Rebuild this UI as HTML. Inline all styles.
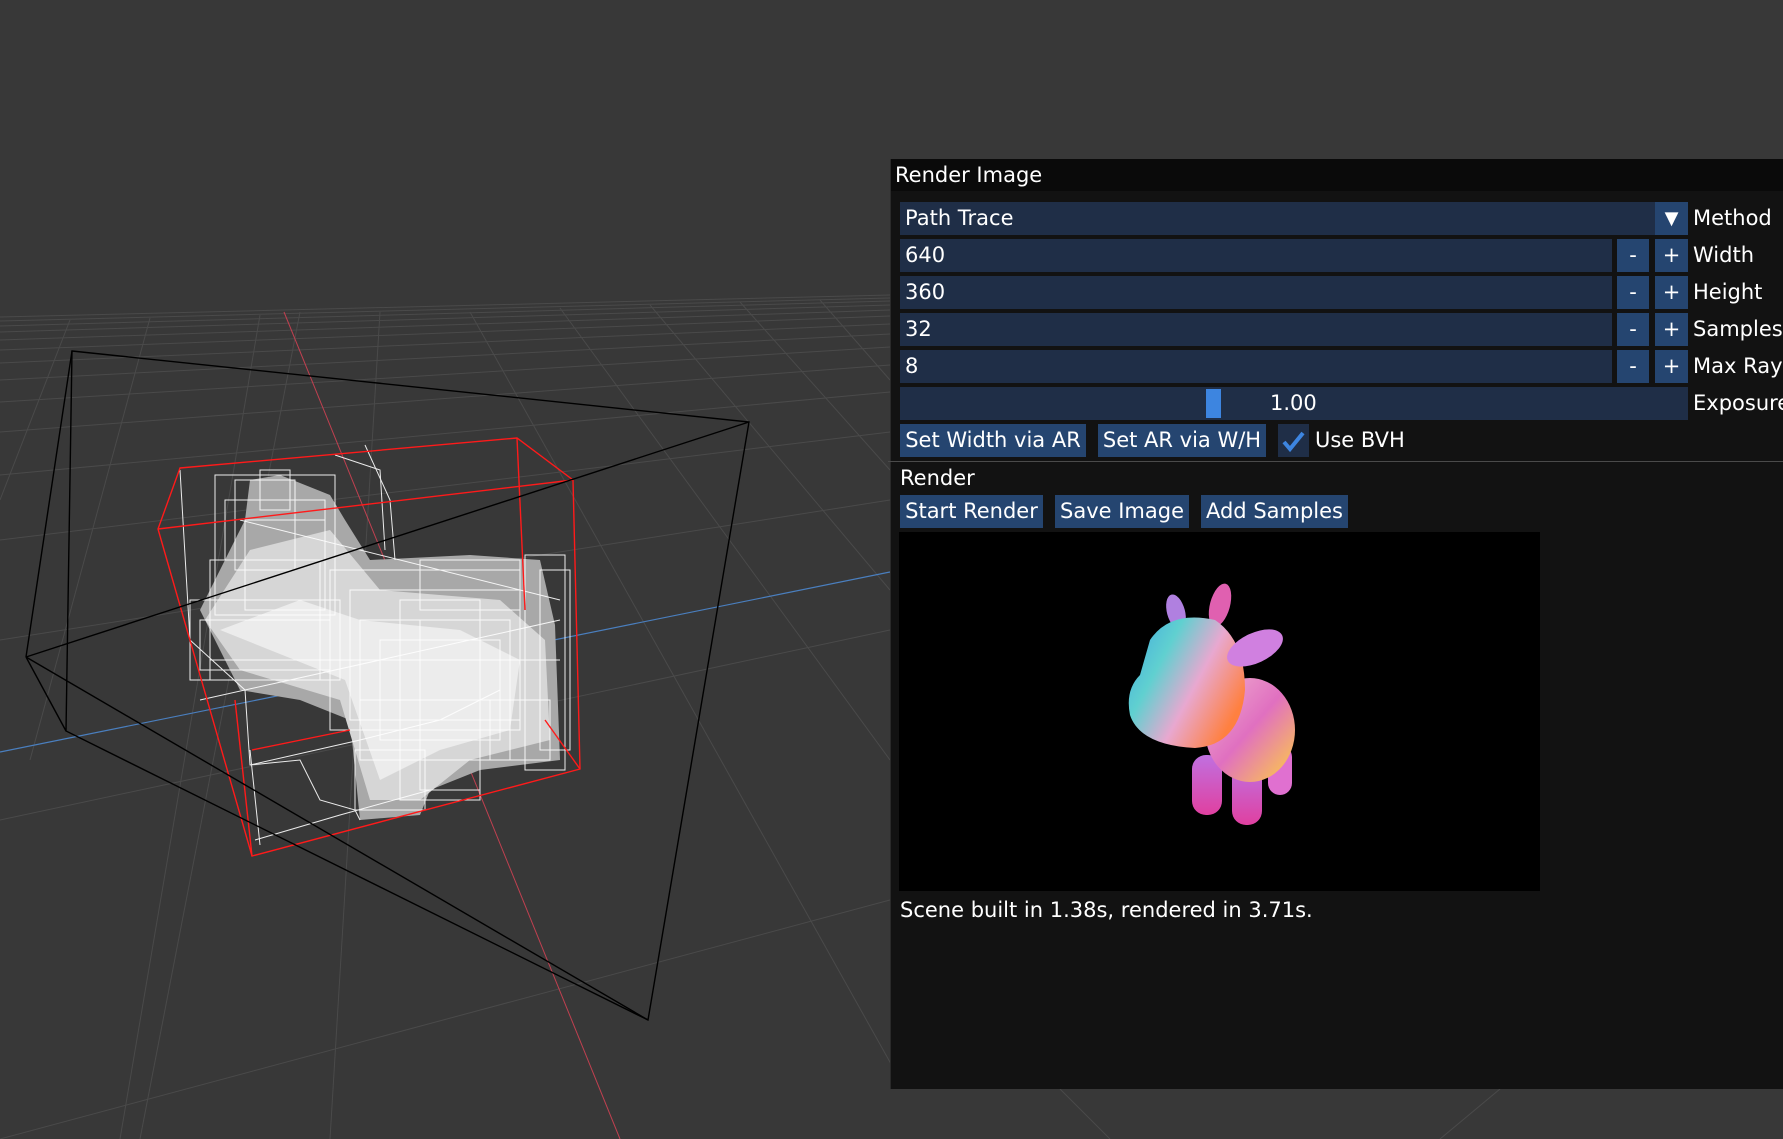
<!DOCTYPE html>
<html><head><meta charset="utf-8"><style>
html,body{margin:0;padding:0;width:1783px;height:1139px;overflow:hidden;background:#383838;font-family:"DejaVu Sans","Liberation Sans",sans-serif;}
#vp{position:absolute;left:0;top:0}
.panel{position:absolute;left:890px;top:159px;width:893px;height:930px;background:#121212;border-left:1px solid #2a2a2a;}
.title{position:absolute;left:0;top:0;width:893px;height:32px;background:#0a0a0a;color:#fff;font-size:21px;line-height:32px;padding-left:4px;box-sizing:border-box}
.f{position:absolute;background:#1f2e47;color:#fff;font-size:21px;line-height:33px;padding-left:5px;box-sizing:border-box;height:33px}
.b{position:absolute;background:#254570;color:#fff;font-size:21px;line-height:33px;text-align:center;height:33px}
.l{position:absolute;color:#fff;font-size:21px;line-height:33px;white-space:nowrap}
</style></head><body>
<svg id="vp" width="1783" height="1139" viewBox="0 0 1783 1139">
<rect width="1783" height="1139" fill="#383838"/>
<g stroke="#4a4a4a" stroke-width="1" fill="none">
<line x1="0" y1="317" x2="890" y2="295"/>
<line x1="0" y1="321" x2="890" y2="298"/>
<line x1="0" y1="326" x2="890" y2="301"/>
<line x1="0" y1="332" x2="890" y2="305"/>
<line x1="0" y1="340" x2="890" y2="310"/>
<line x1="0" y1="350" x2="890" y2="316"/>
<line x1="0" y1="363" x2="890" y2="324"/>
<line x1="0" y1="380" x2="890" y2="334"/>
<line x1="0" y1="402" x2="890" y2="347"/>
<line x1="0" y1="432" x2="890" y2="365"/>
<line x1="0" y1="475" x2="890" y2="392"/>
<line x1="0" y1="540" x2="890" y2="432"/>
<line x1="0" y1="640" x2="890" y2="500"/>
<line x1="0" y1="820" x2="890" y2="630"/>
<line x1="0" y1="1139" x2="890" y2="900"/>
<line x1="120" y1="1139" x2="260" y2="315"/>
<line x1="30" y1="760" x2="150" y2="318"/>
<line x1="0" y1="500" x2="70" y2="320"/>
<line x1="330" y1="1139" x2="380" y2="312"/>
<line x1="470" y1="312" x2="900" y2="1080"/>
<line x1="560" y1="308" x2="890" y2="760"/>
<line x1="650" y1="305" x2="890" y2="590"/>
<line x1="740" y1="302" x2="890" y2="470"/>
<line x1="820" y1="300" x2="890" y2="380"/>
<line x1="300" y1="312" x2="140" y2="1139"/>
<line x1="1060" y1="1089" x2="1110" y2="1139"/>
<line x1="1500" y1="1089" x2="1440" y2="1139"/>
</g>
<line x1="284" y1="312" x2="620" y2="1139" stroke="#c04050" stroke-width="1"/>
<line x1="0" y1="752" x2="890" y2="572" stroke="#4a7fbf" stroke-width="1.2"/>
<g>
<path d="M200 610 L245 520 L250 480 L280 475 L330 495 L345 520 L370 560 L470 555 L540 560 L555 625 L560 760 L480 770 L430 790 L420 815 L360 820 L350 720 L300 700 L240 690 Z" fill="#a8a8a8"/>
<path d="M205 620 L250 550 L330 530 L380 590 L500 600 L545 640 L550 740 L470 760 L420 800 L370 800 L340 700 L240 670 Z" fill="#d6d6d6"/>
<path d="M220 630 L300 600 L360 620 L460 630 L520 660 L510 730 L440 750 L380 780 L345 680 Z" fill="#ececec"/>
</g>
<g stroke="#ffffff" stroke-width="1" fill="none" opacity="0.9">
<rect x="215" y="475" width="120" height="140"/>
<rect x="235" y="480" width="60" height="90"/>
<rect x="260" y="470" width="30" height="40"/>
<rect x="225" y="500" width="100" height="60"/>
<rect x="245" y="520" width="80" height="90"/>
<path d="M180 470 L190 640 L245 690 L250 765 L300 760 L320 800 L355 810 L360 820"/>
<path d="M335 455 L380 470 L385 550"/>
<path d="M365 445 L390 500 L395 560"/>
<rect x="190" y="600" width="150" height="80"/>
<rect x="210" y="560" width="110" height="120"/>
<rect x="200" y="620" width="130" height="50"/>
<rect x="330" y="570" width="190" height="160"/>
<rect x="350" y="590" width="170" height="130"/>
<rect x="360" y="620" width="150" height="140"/>
<rect x="380" y="640" width="120" height="100"/>
<rect x="400" y="600" width="80" height="200"/>
<rect x="420" y="620" width="60" height="170"/>
<rect x="525" y="555" width="40" height="215"/>
<rect x="540" y="570" width="30" height="180"/>
<rect x="420" y="560" width="100" height="50"/>
<rect x="490" y="700" width="60" height="60"/>
<rect x="355" y="750" width="70" height="60"/>
<path d="M250 765 L360 740 L440 720 L500 690"/>
<path d="M255 840 L340 815 L430 790"/>
<path d="M250 750 L260 845"/>
<path d="M200 700 L560 620"/>
<path d="M240 520 L560 600"/>
<path d="M210 660 L560 660"/>
<path d="M360 700 L540 700"/>
</g>
<g stroke="#ff1a1a" stroke-width="1.4" fill="none">
<path d="M180 468 L517 438 L573 480 L580 769 L252 856 L158 529 Z"/>
<path d="M158 529 L573 480"/>
<path d="M517 438 L525 610"/>
<path d="M252 856 L235 700"/>
<path d="M252 750 L350 730"/>
<path d="M545 720 L580 769"/>
</g>
<g stroke="#000" stroke-width="1.4" fill="none">
<path d="M72 351 L749 422 L648 1020 L66 731 Z"/>
<path d="M26 657 L72 351"/>
<path d="M26 657 L749 422"/>
<path d="M26 657 L648 1020"/>
<path d="M26 657 L66 731"/>
</g>
</svg>
<div class="panel">
<div class="title">Render Image</div>
</div>
<div class="f" style="left:900px;top:202px;width:788px;">Path Trace</div>
<div class="b" style="left:1655px;top:202px;width:33px;font-size:18px">&#9660;</div>
<div class="l" style="left:1693px;top:202px">Method</div>

<div class="f" style="left:900px;top:239px;width:712px">640</div>
<div class="b" style="left:1617px;top:239px;width:32px">-</div>
<div class="b" style="left:1655px;top:239px;width:33px">+</div>
<div class="l" style="left:1693px;top:239px">Width</div>

<div class="f" style="left:900px;top:276px;width:712px">360</div>
<div class="b" style="left:1617px;top:276px;width:32px">-</div>
<div class="b" style="left:1655px;top:276px;width:33px">+</div>
<div class="l" style="left:1693px;top:276px">Height</div>

<div class="f" style="left:900px;top:313px;width:712px">32</div>
<div class="b" style="left:1617px;top:313px;width:32px">-</div>
<div class="b" style="left:1655px;top:313px;width:33px">+</div>
<div class="l" style="left:1693px;top:313px">Samples</div>

<div class="f" style="left:900px;top:350px;width:712px">8</div>
<div class="b" style="left:1617px;top:350px;width:32px">-</div>
<div class="b" style="left:1655px;top:350px;width:33px">+</div>
<div class="l" style="left:1693px;top:350px">Max Ray</div>

<div class="f" style="left:900px;top:387px;width:788px;"></div>
<div style="position:absolute;left:1206px;top:389px;width:15px;height:29px;background:#3d85e0"></div>
<div class="l" style="left:1270px;top:387px">1.00</div>
<div class="l" style="left:1693px;top:387px">Exposure</div>

<div class="b" style="left:900px;top:424px;width:186px">Set Width via AR</div>
<div class="b" style="left:1098px;top:424px;width:168px">Set AR via W/H</div>
<div style="position:absolute;left:1278px;top:424px;width:31px;height:33px;background:#1f2e47"></div>
<svg style="position:absolute;left:1278px;top:424px" width="31" height="33"><path d="M6 18 L12 25 L25 9" stroke="#3d85e0" stroke-width="4" fill="none"/></svg>
<div class="l" style="left:1315px;top:424px">Use BVH</div>

<div style="position:absolute;left:888px;top:461px;width:895px;height:1px;background:#4a4a4a"></div>
<div class="l" style="left:900px;top:462px">Render</div>
<div class="b" style="left:900px;top:495px;width:143px">Start Render</div>
<div class="b" style="left:1055px;top:495px;width:134px">Save Image</div>
<div class="b" style="left:1201px;top:495px;width:147px">Add Samples</div>

<svg style="position:absolute;left:899px;top:532px" width="641" height="359">
<rect width="641" height="359" fill="#000"/>
<defs>
<linearGradient id="h" x1="0" y1="0" x2="1" y2="0.6"><stop offset="0" stop-color="#40a8e0"/><stop offset="0.35" stop-color="#60d0d0"/><stop offset="0.65" stop-color="#e8a8d0"/><stop offset="1" stop-color="#ff8040"/></linearGradient>
<linearGradient id="bd" x1="0" y1="0" x2="1" y2="1"><stop offset="0" stop-color="#f0b0d0"/><stop offset="0.5" stop-color="#e070c0"/><stop offset="1" stop-color="#ffd040"/></linearGradient>
<linearGradient id="lg" x1="0" y1="0" x2="0" y2="1"><stop offset="0" stop-color="#c070e0"/><stop offset="1" stop-color="#e040a0"/></linearGradient>
</defs>
<g transform="translate(-899,-532)">
<ellipse cx="1176" cy="612" rx="9" ry="18" fill="#b080e0" transform="rotate(-15 1176 612)"/>
<ellipse cx="1220" cy="605" rx="10" ry="22" fill="#e060b0" transform="rotate(15 1220 605)"/>
<rect x="1192" y="755" width="30" height="60" rx="14" fill="url(#lg)"/>
<rect x="1232" y="765" width="30" height="60" rx="14" fill="url(#lg)"/>
<rect x="1268" y="745" width="24" height="50" rx="12" fill="#e070d0"/>
<ellipse cx="1250" cy="730" rx="45" ry="52" fill="url(#bd)"/>
<path d="M1150 640 Q1170 610 1215 620 Q1245 640 1245 690 Q1240 745 1195 748 Q1140 745 1130 715 Q1125 690 1140 675 Z" fill="url(#h)"/>
<ellipse cx="1255" cy="648" rx="30" ry="15" fill="#d080e0" transform="rotate(-25 1255 648)"/>
</g>
</svg>
<div class="l" style="left:900px;top:894px">Scene built in 1.38s, rendered in 3.71s.</div>
</body></html>
